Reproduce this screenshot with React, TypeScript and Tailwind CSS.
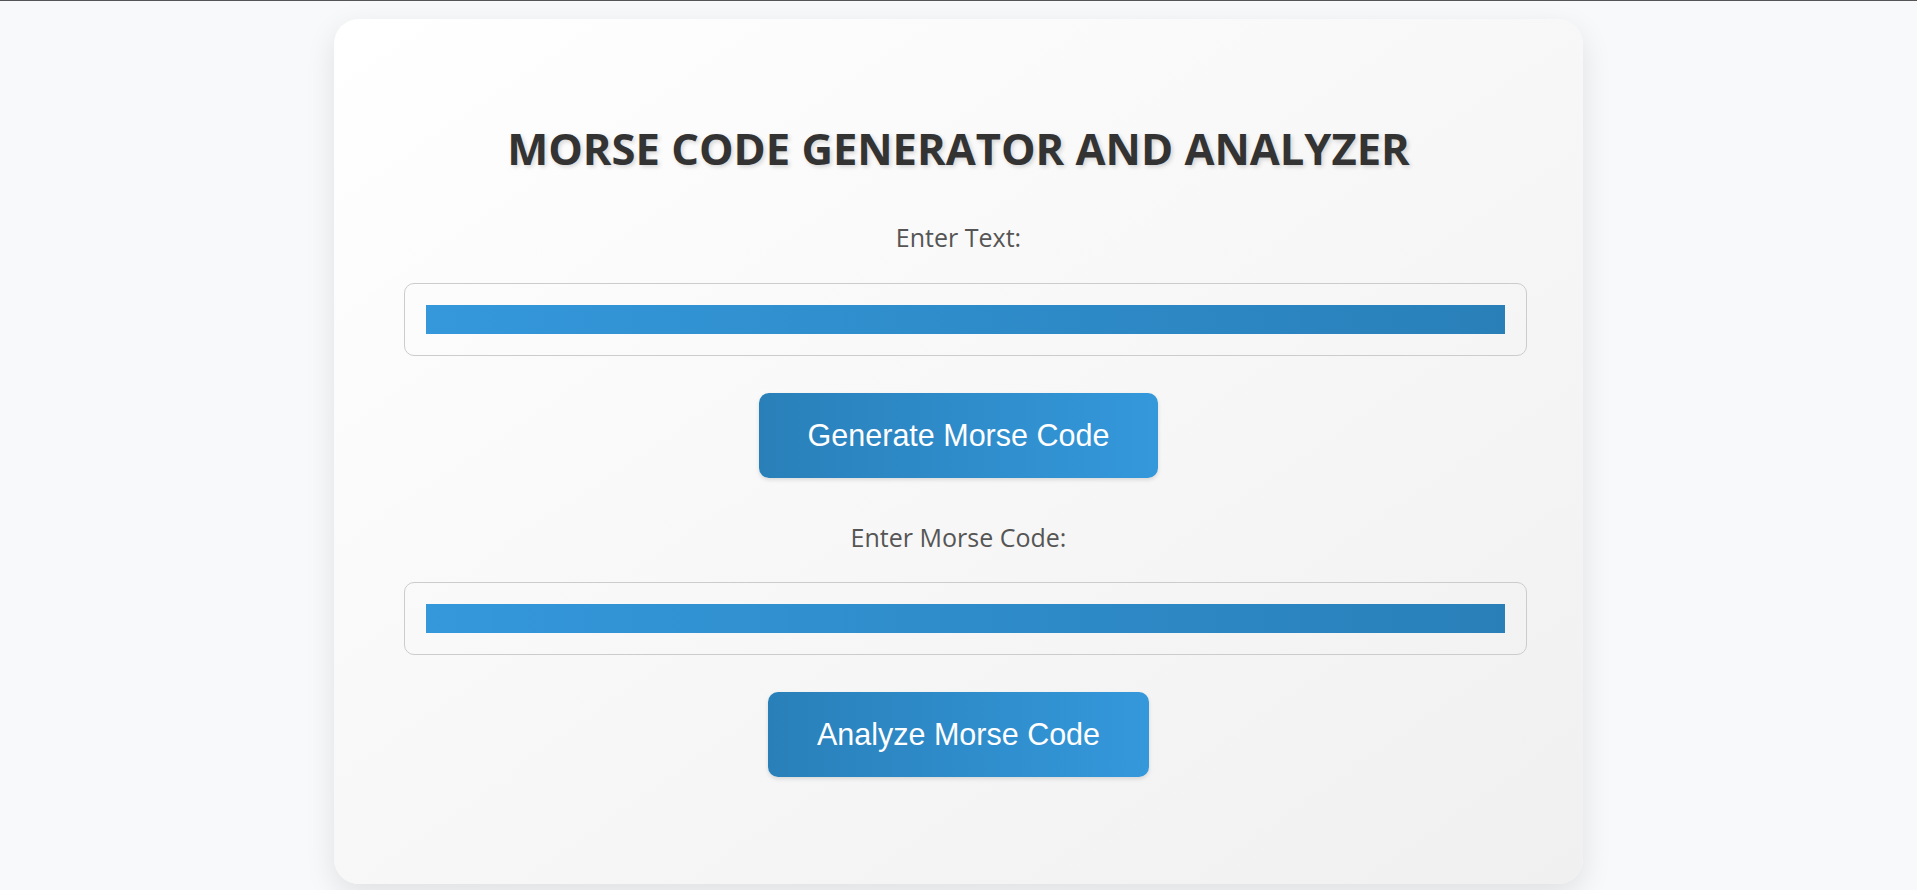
const Field = () => {
    return (
        <div className='w-[1123px] border border-[#cccccc] rounded-[10px] p-[21px]'>
            <input type="text" className='block w-full h-[29px] bg-gradient-to-r from-[#3498db] to-[#2980b9] outline-none border-0' />
        </div>
    )
}

const ActionButton = ({ label }: { label: string }) => {
    return (
        <button className="h-[85px] px-[49px] rounded-[10px] bg-gradient-to-r from-[#2980b9] to-[#3498db] text-white text-[30.5px] font-['Liberation_Sans',Arial,sans-serif] shadow-[0_2px_4px_rgba(0,0,0,0.12)]">
            {label}
        </button>
    )
}

const App = () => {
    return (
        <div className="min-h-screen bg-[#f8f9fa] border-t border-[#555555] pt-[18px] font-['Open_Sans',sans-serif]">
            <div className='w-[1249px] mx-auto rounded-[25px] bg-gradient-to-br from-white to-[#f0f0f0] shadow-[0_10px_30px_rgba(0,0,0,0.1)] pl-[70px] pr-[70px] pt-[106px] pb-[107px] flex flex-col items-center text-center'>
                <h1 className='text-[43.5px] leading-[48px] font-bold text-[#333333] [text-shadow:2px_2px_4px_rgba(0,0,0,0.15)]'>
                    MORSE CODE GENERATOR AND ANALYZER
                </h1>
                <label className='mt-[48px] text-[25px] leading-[32px] text-[#555555]'>Enter Text:</label>
                <div className='mt-[30px] self-start'>
                    <Field />
                </div>
                <div className='mt-[37px]'>
                    <ActionButton label="Generate Morse Code" />
                </div>
                <label className='mt-[43px] text-[25px] leading-[32px] text-[#555555]'>Enter Morse Code:</label>
                <div className='mt-[29px] self-start'>
                    <Field />
                </div>
                <div className='mt-[37px]'>
                    <ActionButton label="Analyze Morse Code" />
                </div>
            </div>
        </div>
    )
}

export default App
